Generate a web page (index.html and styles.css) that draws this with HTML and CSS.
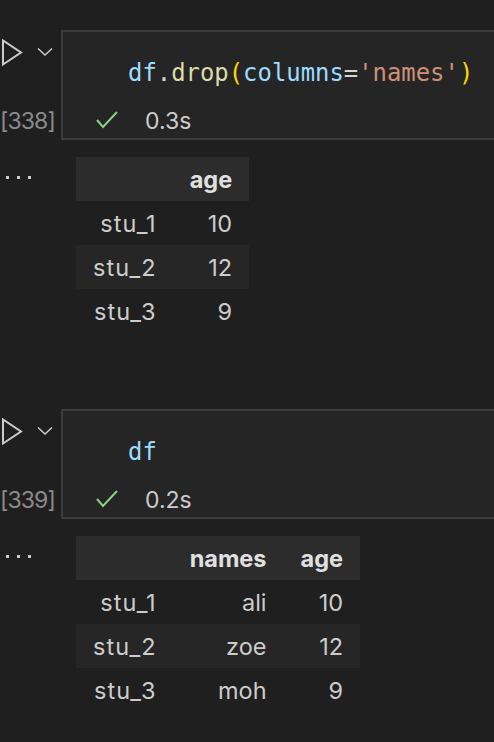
FILE: index.html
```html
<!DOCTYPE html>
<html>
<head>
<meta charset="utf-8">
<link rel="stylesheet" href="styles.css">
</head>
<body>
<div class="notebook">
  <div class="cell">
    <div class="gutter">
      <div class="run">
        <svg class="play" width="24" height="28" viewBox="0 0 24 28"><polygon points="3,1.5 3,25.5 21,13.5" fill="none" stroke="#cccccc" stroke-width="2" stroke-linejoin="miter"/></svg>
        <svg class="chev" width="18" height="10" viewBox="0 0 18 10"><polyline points="2,1.5 9,8 16,1.5" fill="none" stroke="#cccccc" stroke-width="1.5"/></svg>
      </div>
      <div class="count">[338]</div>
    </div>
    <div class="editor">
      <div class="code"><span class="v">df</span><span class="p">.</span><span class="f">drop</span><span class="b">(</span><span class="v">columns</span><span class="p">=</span><span class="s">'names'</span><span class="b">)</span></div>
      <div class="status">
        <svg class="check" width="24" height="20" viewBox="0 0 24 20"><polyline points="2,9 8,16 22,1" fill="none" stroke="#89d185" stroke-width="2"/></svg>
        <span class="time">0.3s</span>
      </div>
    </div>
  </div>
  <div class="output">
    <div class="more"><i></i><i></i><i></i></div>
    <table class="df">
      <thead><tr><th></th><th>age</th></tr></thead>
      <tbody>
        <tr><th>stu_1</th><td>10</td></tr>
        <tr><th>stu_2</th><td>12</td></tr>
        <tr><th>stu_3</th><td>9</td></tr>
      </tbody>
    </table>
  </div>

  <div class="cell cell2">
    <div class="gutter">
      <div class="run">
        <svg class="play" width="24" height="28" viewBox="0 0 24 28"><polygon points="3,1.5 3,25.5 21,13.5" fill="none" stroke="#cccccc" stroke-width="2" stroke-linejoin="miter"/></svg>
        <svg class="chev" width="18" height="10" viewBox="0 0 18 10"><polyline points="2,1.5 9,8 16,1.5" fill="none" stroke="#cccccc" stroke-width="1.5"/></svg>
      </div>
      <div class="count">[339]</div>
    </div>
    <div class="editor">
      <div class="code"><span class="v">df</span></div>
      <div class="status">
        <svg class="check" width="24" height="20" viewBox="0 0 24 20"><polyline points="2,9 8,16 22,1" fill="none" stroke="#89d185" stroke-width="2"/></svg>
        <span class="time">0.2s</span>
      </div>
    </div>
  </div>
  <div class="output">
    <div class="more"><i></i><i></i><i></i></div>
    <table class="df">
      <thead><tr><th></th><th>names</th><th>age</th></tr></thead>
      <tbody>
        <tr><th>stu_1</th><td>ali</td><td>10</td></tr>
        <tr><th>stu_2</th><td>zoe</td><td>12</td></tr>
        <tr><th>stu_3</th><td>moh</td><td>9</td></tr>
      </tbody>
    </table>
  </div>
</div>
</body>
</html>
```

FILE: styles.css
```css
html, body {
  margin: 0;
  padding: 0;
  background: #1f1f1f;
  overflow: hidden;
}
body {
  width: 494px;
  height: 742px;
  font-family: Inter, "Noto Sans", sans-serif;
  color: #cccccc;
}
.notebook {
  padding-top: 30px;
}
.cell {
  display: grid;
  grid-template-columns: 61px 1fr;
  height: 110px;
  margin-right: -20px;
}
.cell2 {
  margin-top: 76px;
}
.gutter {
  display: flex;
  flex-direction: column;
  justify-content: space-between;
  padding: 9px 0 7px 0;
}
.run {
  display: flex;
  align-items: center;
  gap: 12px;
  height: 28px;
}
.chev {
  margin-top: -3px;
}
.count {
  font-size: 23px;
  color: #8b8b8b;
  line-height: 24px;
  text-align: right;
  padding-right: 8px;
  letter-spacing: -0.9px;
  white-space: nowrap;
}
.editor {
  background: #252526;
  border: 2px solid #3c3c3e;
  border-right: 0;
  display: flex;
  flex-direction: column;
}
.code {
  font-family: "DejaVu Sans Mono", monospace;
  font-size: 23.9px;
  line-height: 30px;
  padding: 26px 0 0 65px;
  height: 48px;
  white-space: pre;
}
.v { color: #9cdcfe; }
.p { color: #d4d4d4; }
.f { color: #dcdcaa; }
.b { color: #ffd700; }
.s { color: #ce9178; }
.status {
  display: flex;
  align-items: center;
  padding-left: 32px;
  height: 30px;
  gap: 26px;
}
.time {
  font-size: 23px;
  color: #cccccc;
}
.output {
  display: grid;
  grid-template-columns: 76px auto;
  padding-top: 17px;
}
.more {
  display: flex;
  gap: 8px;
  padding: 19px 0 0 6px;
}
.more i {
  width: 3px;
  height: 3px;
  background: #cccccc;
}
.df {
  border-collapse: collapse;
  font-size: 23.5px;
  justify-self: start;
}
.df th, .df td {
  height: 44px;
  padding: 0 17px;
  text-align: right;
  white-space: nowrap;
  box-sizing: border-box;
}
.df thead th {
  background: #2c2c2c;
  font-weight: 700;
  color: #e0e0e0;
}
.df tbody th {
  font-weight: 400;
  letter-spacing: 1.1px;
  padding-right: 15.9px;
}
.df tbody tr:nth-child(2) {
  background: #262626;
}
```
